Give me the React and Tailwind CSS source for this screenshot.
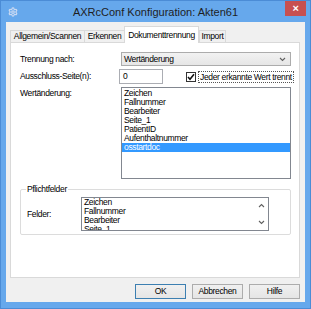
import { Settings } from 'lucide-react';

const listItems = ['Zeichen', 'Fallnummer', 'Bearbeiter', 'Seite_1', 'PatientID', 'Aufenthaltnummer', 'osstartdoc'];
const requiredItems = ['Zeichen', 'Fallnummer', 'Bearbeiter', 'Seite_1'];

const tabs = [
  { label: 'Allgemein/Scannen', width: 'w-[74px]' },
  { label: 'Erkennen', width: 'w-[40px]' },
  { label: 'Dokumenttrennung', width: 'w-[75px]', active: true },
  { label: 'Import', width: 'w-[27px]' },
];

const Chevron = ({ up = false }) => (
  <svg width="7" height="5" viewBox="0 0 7 5" className="block">
    <path
      d={up ? 'M1 4 L3.5 1.5 L6 4' : 'M1 1 L3.5 3.5 L6 1'}
      fill="none"
      stroke="#606060"
      strokeWidth="1.1"
    />
  </svg>
);

const WinButton = ({ children, isDefault }) => (
  <button
    type="button"
    className={`flex h-[15px] w-[51px] items-center justify-center border bg-gradient-to-b from-[#f0f0f0] to-[#e5e5e5] leading-none ${
      isDefault ? 'border-[#3c7fb1]' : 'border-[#acacac]'
    }`}
  >
    {children}
  </button>
);

export default function App() {
  return (
    <div className="flex h-[309px] w-[311px] flex-col border border-[#4b8cd6] bg-[#66a8ec] font-['Liberation_Sans',Arial,sans-serif] text-[8.5px] tracking-[-0.35px] text-black">
      {/* title bar */}
      <div className="grid h-[21px] shrink-0 grid-cols-[1fr_auto_1fr] items-start">
        <div className="pl-[7px] pt-[6px]">
          <Settings size={10} strokeWidth={3} className="text-[#c9d9f2]" />
        </div>
        <div className="pt-[4px] text-[11px] leading-[14px] tracking-normal text-[#1e1e1e]">AXRcConf Konfiguration: Akten61</div>
        <div className="flex justify-end pr-[4px]">
          <div className="flex h-[15px] w-[21px] items-center justify-center bg-[#c75050] text-[11px] font-bold leading-none text-white">
            ×
          </div>
        </div>
      </div>

      {/* client area */}
      <div className="mx-[5px] mb-[6px] flex flex-1 flex-col bg-[#f0f0f0] pl-[4px] pr-[5px]">
        {/* tabs */}
        <div className="flex h-[20px] items-end pt-[4px]">
          {tabs.map((tab) =>
            tab.active ? (
              <div
                key={tab.label}
                className={`${tab.width} relative z-10 -mb-px flex h-[17px] items-start justify-center whitespace-nowrap border border-b-0 border-[#d9d9d9] bg-white pt-[3px] leading-[10px]`}
              >
                {tab.label}
              </div>
            ) : (
              <div
                key={tab.label}
                className={`${tab.width} flex h-[12px] items-center justify-center whitespace-nowrap border border-b-0 border-r-0 border-[#d9d9d9] bg-[#f0f0f0] leading-none last:border-r`}
              >
                {tab.label}
              </div>
            )
          )}
        </div>

        {/* tab panel */}
        <div className="flex h-[236px] flex-col border border-[#d9d9d9] bg-white">
          <div className="mt-[9px] flex h-[14px] items-center">
            <div className="w-[110px] pl-[9px]">Trennung nach:</div>
            <div className="mr-[8px] flex h-[14px] flex-1 items-center justify-between border border-[#acacac] bg-gradient-to-b from-[#f2f2f2] to-[#e6e6e6] pl-[2px] pr-[4px]">
              <span>Wertänderung</span>
              <Chevron />
            </div>
          </div>

          <div className="mt-[3px] flex h-[15px] items-center">
            <div className="w-[108px] pl-[9px]">Ausschluss-Seite(n):</div>
            <div className="flex h-[15px] w-[44px] items-center border border-[#abadb3] bg-white pl-[3px]">0</div>
            <div className="ml-[23px] flex items-center gap-[2px] whitespace-nowrap">
              <div className="flex h-[10px] w-[10px] items-center justify-center border border-[#333] bg-white">
                <svg width="8" height="8" viewBox="0 0 8 8">
                  <path d="M1 4 L3 6.2 L7 1.2" fill="none" stroke="#111" strokeWidth="1.6" />
                </svg>
              </div>
              <span className="border border-dotted border-[#555] px-[1px] leading-[10px]">Jeder erkannte Wert trennt</span>
            </div>
          </div>

          <div className="mt-[3px] flex">
            <div className="w-[110px] pl-[9px] pt-[1px] leading-[10px]">Wertänderung:</div>
            <div className="mr-[8px] h-[92px] flex-1 border border-[#828790] bg-white pt-[1px]">
              {listItems.map((item) => (
                <div
                  key={item}
                  className={`h-[9px] px-[2px] leading-[9px] ${item === 'osstartdoc' ? 'bg-[#3399ff] text-white' : ''}`}
                >
                  {item}
                </div>
              ))}
            </div>
          </div>

          <fieldset className="ml-[9px] mr-[8px] mt-[5px] h-[51px] rounded-[2px] border border-[#dcdcdc] px-0">
            <legend className="ml-[5px] px-[1px] leading-[10px]">Pflichtfelder</legend>
            <div className="mt-[3px] flex items-center">
              <div className="w-[60px] pl-[6px]">Felder:</div>
              <div className="flex h-[34px] w-[188px] border border-[#828790] bg-white">
                <div className="flex-1 overflow-hidden px-[2px]">
                  {requiredItems.map((item) => (
                    <div key={item} className="h-[9px] leading-[9px]">
                      {item}
                    </div>
                  ))}
                </div>
                <div className="flex w-[14px] flex-col items-center justify-between py-[5px]">
                  <Chevron up />
                  <Chevron />
                </div>
              </div>
            </div>
          </fieldset>
        </div>

        {/* buttons */}
        <div className="mt-[6px] flex justify-end gap-[6px]">
          <WinButton isDefault>OK</WinButton>
          <WinButton>Abbrechen</WinButton>
          <WinButton>Hilfe</WinButton>
        </div>
      </div>
    </div>
  );
}
